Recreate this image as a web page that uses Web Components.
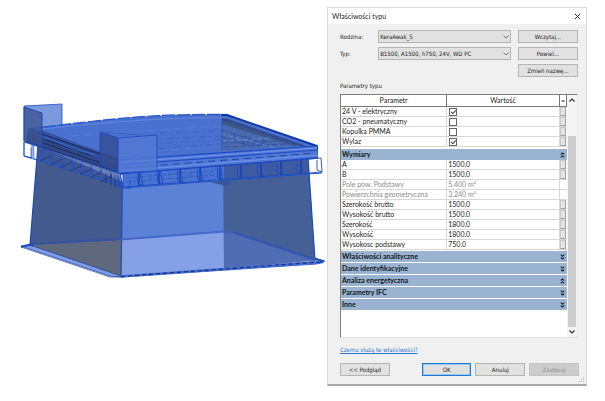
<!DOCTYPE html>
<html lang="pl">
<head>
<meta charset="utf-8">
<title>Właściwości typu</title>
<style>
body { margin: 0; background: #fff; color: #222; font: 6px/8px "DejaVu Sans Condensed", "DejaVu Sans", sans-serif; }
</style>
</head>
<body>
<app-page>
  <model-view slot="view"></model-view>
  <type-dialog>
    <span slot="title">Właściwości typu</span>
    <type-picker></type-picker>
    <param-table></param-table>
    <a slot="help" href="#help">Czemu służą te właściwości?</a>
    <ui-button slot="actions">&lt;&lt; Podgląd</ui-button>
    <ui-button slot="actions" primary>OK</ui-button>
    <ui-button slot="actions">Anuluj</ui-button>
    <ui-button slot="actions" disabled>Zastosuj</ui-button>
  </type-dialog>
</app-page>
<script>
class Base extends HTMLElement {
  constructor() {
    super();
    this.attachShadow({ mode: 'open' }).innerHTML = this.render();
  }
  render() { return ''; }
}

customElements.define('app-page', class extends Base {
  render() {
    return `<style>
      :host { display: grid; grid-template-columns: 327fr 260fr; padding: 7px 18px 15px 0; align-items: start; }
    </style><slot name="view"></slot><slot></slot>`;
  }
});

customElements.define('ui-button', class extends HTMLElement {
  connectedCallback() {
    if (this.shadowRoot) return;
    this.attachShadow({ mode: 'open' }).innerHTML = `<style>
      :host { display: block; }
      button { display: block; box-sizing: border-box; width: 100%; height: 13px; padding: 0; font: inherit; line-height: 10px;
        color: #222; background: #e1e1e1; border: 1px solid #b4b4b4; text-align: center; white-space: nowrap; }
      :host([primary]) button { border-color: #1a7ad4; box-shadow: inset 0 0 0 1px #9cc6ec; }
      button:disabled { color: #888; background: #ccc; border-color: #c4c4c4; }
    </style><button type="button" ${this.hasAttribute('disabled') ? 'disabled' : ''}><slot></slot></button>`;
  }
});

customElements.define('type-dialog', class extends Base {
  render() {
    return `<style>
      :host { display: block; background: #f0f0f0; border: 1px solid #dadada; border-bottom: 2px solid #aaa; position: relative; }
      header { display: flex; justify-content: space-between; align-items: center; background: #fff; height: 16px; padding: 0 5px 0 4px; font: 7px/9px Lato, sans-serif; }
      header button { border: 0; padding: 0; background: none; display: block; width: 7px; height: 7px; }
      header svg { display: block; width: 7px; height: 7px; }
      main { padding: 6px 7px 0 12px; }
      .help { padding-top: 7px; line-height: 9px; }
      ::slotted(a) { color: #2878cc; }
      footer { display: grid; grid-template-columns: 50fr 24fr 50fr 50fr 50fr; column-gap: 4px; padding: 9px 0 8px; }
      ::slotted(ui-button[primary]) { grid-column: 3; }
      .grip { position: absolute; right: 1px; bottom: 1px; width: 6px; height: 6px; }
    </style>
    <header><slot name="title"></slot>
      <button type="button" aria-label="Zamknij"><svg viewBox="0 0 7 7"><path d="M.8.8 6.2 6.2M6.2.8.8 6.2" stroke="#222" stroke-width=".9"/></svg></button>
    </header>
    <main><slot></slot><div class="help"><slot name="help"></slot></div>
      <footer><slot name="actions"></slot></footer></main>
    <svg class="grip" viewBox="0 0 6 6" fill="#b5b5b5"><path d="M4 0h1v1H4zM2 2h1v1H2zM4 2h1v1H4zM0 4h1v1H0zM2 4h1v1H2zM4 4h1v1H4z"/></svg>`;
  }
});

customElements.define('type-picker', class extends Base {
  render() {
    return `<style>
      :host { display: grid; grid-template-columns: 38fr 139fr 60fr; row-gap: 4px; align-items: center; padding: 0 1px 4px 0; }
      select { appearance: none; box-sizing: border-box; width: 100%; height: 13px; border: 1px solid #b4b4b4; border-radius: 0;
        padding: 0 12px 0 1px; margin: 0; font: inherit; line-height: 11px; color: #222; background: #e1e1e1;  }
      .pick { display: grid; align-items: center; margin-right: 7px; }
      .pick > * { grid-area: 1 / 1; }
      .pick svg { justify-self: end; width: 6px; height: 4px; margin-right: 2px; pointer-events: none; }
      ui-button:last-child { grid-column: 3; }
    </style>
    <label for="f">Rodzina:</label>
    <div class="pick"><select id="f"><option>KeraAwak_S</option></select><svg viewBox="0 0 6 4"><path d="M.5.5 3 3 5.5.5" fill="none" stroke="#555" stroke-width=".8"/></svg></div>
    <ui-button>Wczytaj...</ui-button>
    <label for="t">Typ:</label>
    <div class="pick"><select id="t"><option>B1500, A1500, h750, 24V, WD PC</option></select><svg viewBox="0 0 6 4"><path d="M.5.5 3 3 5.5.5" fill="none" stroke="#555" stroke-width=".8"/></svg></div>
    <ui-button>Powiel...</ui-button>
    <ui-button>Zmień nazwę...</ui-button>`;
  }
});

const groups = [
  { rows: [['24 V - elektryczny', true], ['CO2 - pneumatyczny', false], ['Kopulka PMMA', false], ['Wylaz', true]] },
  { title: 'Wymiary', open: true, rows: [['A', '1500.0'], ['B', '1500.0'],
    ['Pole pow. Podstawy', '5.400 m²', 1], ['Powierzchnia geometryczna', '3.240 m²', 1],
    ['Szerokość brutto', '1500.0'], ['Wysokość brutto', '1500.0'], ['Szerokość', '1800.0'],
    ['Wysokość', '1800.0'], ['Wysokosc podstawy', '750.0']] },
  { title: 'Właściwości analityczne', rows: [] },
  { title: 'Dane identyfikacyjne', rows: [] },
  { title: 'Analiza energetyczna', open: true, rows: [] },
  { title: 'Parametry IFC', rows: [] },
  { title: 'Inne', rows: [] }
];

customElements.define('param-table', class extends Base {
  render() {
    const chev = up => `<svg viewBox="0 0 5 6"><path d="${up ? 'M.8 2.500 2.500.9l1.700 1.600M.8 5.300l1.700-1.600 1.700 1.600' : 'M.8.7l1.700 1.600L4.200.7M.8 3.500l1.700 1.600 1.700-1.600'}" fill="none" stroke="#1c2836" stroke-width="1.100"/></svg>`;
    const cell = (n, v) => typeof v === 'boolean' ? `<input type="checkbox" aria-label="${n}" ${v ? 'checked' : ''}>` : v;
    const body = groups.map(g => `<tbody>${g.title ? `<tr class="group"><th colspan="3"><div>${g.title}<button type="button" aria-label="${g.title}">${chev(g.open)}</button></div></th></tr>` : ''}${
      g.rows.map(([n, v, ro]) => `<tr class="${ro ? 'ro' : ''}"><td>${n}</td><td>${cell(n, v)}</td><td>${ro ? '' : `<button type="button" aria-label="Powiąż ${n}"></button>`}</td></tr>`).join('')}</tbody>`).join('');
    return `<style>
      :host { display: block; }
      .cap { line-height: 10px; padding-bottom: 3px; }
      .frame { display: grid; grid-template-columns: 1fr 10px; height: 244px; background: #fff; box-sizing: border-box;
        border: 1px solid #808080; border-right-color: #e8e8e8; border-bottom-color: #e0e0e0; margin-right: 1px; }
      table { width: 100%; border-collapse: separate; border-spacing: 0; table-layout: fixed; font: 7px/9px Lato, sans-serif; align-self: start; }
      th, td { padding: 0; text-align: left; height: 9px; white-space: nowrap; overflow: hidden; }
      thead th { text-align: center; font-weight: 400; height: 11px; border-bottom: 1px solid #777; border-right: 1px solid #777; }
      td { border-bottom: 1px solid #d6d6d6; border-right: 1px solid #d6d6d6; padding-left: 1px; }
      td:last-child { padding: 0; border-right: 0; }
      .ro { color: #8a8a8a; }
      .group th { height: auto; font-weight: 700; border-top: 1px solid #fff; color: #101820; }
      .group div { display: flex; justify-content: space-between; align-items: center; height: 11px; line-height: 11px; padding: 0 2px 0 1px; background: #99b3d1; }
      tbody:nth-of-type(2) th { border-top-width: 2px; }
      button { display: block; border: 0; margin: 0; padding: 0; background: none; }
      .group svg { display: block; width: 5px; height: 6px; }
      td button { box-sizing: border-box; width: 6px; height: 9px; background: #e4e4e4; border: 1px solid #c8c8c8; border-right-color: #a0a0a0; border-bottom-color: #a0a0a0; }
      input { appearance: none; display: block; box-sizing: border-box; width: 8px; height: 8px; margin: 0 0 0 1px; border: 1px solid #666; background: #fff; }
      input:checked::after { content: ""; display: block; box-sizing: border-box; width: 5px; height: 3px; border: solid #444; border-width: 0 0 1px 1px; transform: translate(1px, 1px) rotate(-45deg); }
      .bar { display: flex; flex-direction: column; align-items: center; justify-content: space-between; background: #f4f4f4; }
      .bar button { width: 10px; height: 10px; display: grid; place-items: center; }
      .bar svg { width: 6px; height: 4px; }
      .track { flex: 1; width: 8px; display: flex; padding: 31px 0 0; }
      .thumb { flex: 1; background: #cdcdcd; }
    </style>
    <div class="cap">Parametry typu</div>
    <div class="frame">
      <table><colgroup><col style="width:47%"><col><col style="width:7px"></colgroup>
        <thead><tr><th>Parametr</th><th>Wartość</th><th>=</th></tr></thead>${body}</table>
      <div class="bar">
        <button type="button" aria-label="W górę"><svg viewBox="0 0 6 4"><path d="M.5 3.500 3 1l2.500 2.500" fill="none" stroke="#333" stroke-width="1.200"/></svg></button>
        <div class="track"><div class="thumb"></div></div>
        <button type="button" aria-label="W dół"><svg viewBox="0 0 6 4"><path d="M.5.5 3 3 5.500.5" fill="none" stroke="#333" stroke-width="1.200"/></svg></button>
      </div>
    </div>`;
  }
});

customElements.define('model-view', class extends Base {
  render() {
    const seg = (a, b, t) => [a[0] + (b[0] - a[0]) * t, a[1] + (b[1] - a[1]) * t].map(v => v.toFixed(1)).join(' ');
    // Frames hung below the roof edge: posts between an upper and a lower rail, with a smaller inner return.
    const cage = (u0, u1, l0, l1, n, dx, dy) => {
      let d = `M${u0}L${u1}M${l0}L${l1}`;
      for (let i = 0; i <= n; i++) {
        const t = i / n, lo = seg(l0, l1, t).split(' ').map(Number);
        d += `M${seg(u0, u1, t)}L${lo.join(' ')}l${dx} ${dy}v-10`;
      }
      return d;
    };
    const rail = (a, b, n) => { let d = ''; for (let i = 0; i < n; i++) d += `M${seg(a, b, i / n)}L${seg(a, b, (i + .6) / n)}`; return d; };
    return `<style>:host { display: block; } svg { display: block; width: 100%; height: auto; }</style>
    <svg viewBox="0 7 327 378" role="img" aria-label="Model 3D klapy dymowej" stroke-linejoin="round">
      <polygon points="21,246 30,244 224,231 236,232 324,261 317,264 121,277 110,276" fill="#809de4" stroke="#244fc0" stroke-width=".8"/>
      <polygon points="38,145 123,182 121,276 30,245" fill="#435a8f"/>
      <polygon points="30,245 121,240 121,276" fill="#5f687c"/>
      <polygon points="123,180 224,172 224,232 121,240" fill="#5b82d4"/>
      <polygon points="121,240 224,232 224,269 121,276" fill="#86a0e5"/>
      <polygon points="223,165 308,157 315,260 224,269" fill="#446097"/>
      <polygon points="224,232 233,232 315,260 224,269" fill="#506db3"/>
      <path d="M38 145 30 245M122.500 183 121 276M308 158 315 260" fill="none" stroke="#184abe" stroke-width="1.200"/>
      <path d="M31 244 121 239" stroke="#3552a2" stroke-width="1.800"/>
      <path d="M121 239.500 224 231.500" stroke="#4369ca" stroke-width="2"/>
      <path d="M224 232h8L315 260" fill="none" stroke="#3f62b6" stroke-width="2.500"/>
      <path d="M233 232 314 259M30 245 121 276M21 247 110 277h11" fill="none" stroke="#244799" stroke-width=".7"/>
      <path d="M121 276.500 323 262" stroke="#416bd0" stroke-width="2.500"/>
      <path d="M121 276.500 319 262" stroke="#17327c" stroke-width="1.200" stroke-dasharray="4 3"/>
      <path d="M21 247l9-2 3 1M315 259l9 2-5 2" fill="none" stroke="#1746b3" stroke-width="1.500"/>

      <polygon points="24,106 62,104 62,125 42,130 24,141" fill="#7d99dd" stroke="#1e4fc9" stroke-width=".8"/>
      <path d="M28 129Q90 121 130 117.500T226 114.500L317 146 318 158 120 174 26 142Z" fill="#4a70cc"/>
      <path d="M38 128Q90 121 140 119T223 117.500L222 148 118 162Z" fill="#4a70d0"/>
      <polygon points="222,118 227,118 304,145 222,151" fill="#496aae"/>
      <polygon points="222,118 228,119 304,145 294,146 222,124" fill="#3c5486"/>
      <path d="M160 133 221 131M135 140 222 136M150 144 222 140M158 149 222 144" fill="none" stroke="#4068c2" stroke-width="1.300" stroke-dasharray="7 3 2 4"/>
      <path d="M132 153 221 146M70 136 221 126" fill="none" stroke="#567cda" stroke-width="1" stroke-dasharray="9 4"/>
      <path d="M222 130 268 145M222 137 250 146M222 143 286 141M224 147 286 144M235 133v8l9 4v-9l9 3v7l9-1v-5l9 3" fill="none" stroke="#3253a2" stroke-width=".9" stroke-dasharray="6 2"/>
      <path d="M222 134 276 148M223 141 272 138" stroke="#6d8edb" stroke-width=".8" stroke-dasharray="4 3"/>
      <polygon points="28,128 40,130 118,158 118,172 26,142" fill="#304984"/>
      <path d="M28 129 118 160M29 134 118 165M29 138 118 169M26 142 120 173" fill="none" stroke="#1a2e6a" stroke-width="1.300"/>
      <path d="M36 134 118 163M31 131v8M38 137 50 139 62 144 75 150 88 153 101 160 115 163M34 130 118 158" fill="none" stroke="#3762d0" stroke-width=".9"/>
      <path d="M28 129Q90 121 130 117.500T226 114.500" fill="none" stroke="#2456c6" stroke-width="1.200" stroke-dasharray="13 2"/>
      <path d="M34 130Q95 123 145 120T222 118" fill="none" stroke="#628add" stroke-width="1"/>
      <path d="M221 115h6L317 146v12" fill="none" stroke="#0e37ad" stroke-width="2"/>
      <path d="M223 119 306 147" stroke="#284ba0" stroke-width="1.500"/>
      <path d="M222 118V151" stroke="#2e50a9" stroke-width=".8"/>

      <polygon points="118,160 317,146 318,158 120,174" fill="#5177d4"/>
      <path d="M118 160 317 146M118 165 317 150" stroke="#1d4bc4" stroke-width="1.200"/>
      <path d="M118 162.500 317 148M120 171 318 155" stroke="#6f94ea" stroke-width="1"/>
      <path d="${rail([125, 168], [315, 153], 16)}" stroke="#2148ab" stroke-width="1"/>
      <path d="M120 174 318 158" stroke="#1a49bd" stroke-width="1.300"/>

      <polygon points="38,147 118,173 123,188 38,160" fill="#3b5599" opacity=".75"/>
      <polygon points="123,174 224,166 224,180 123,187" fill="#4a72d2"/>
      <polygon points="224,166 308,159 308,174 224,180" fill="#3f5b9d"/>
      <path d="${cage([24, 142], [120, 174], [24, 156], [123, 187], 10, 7, 2)}" fill="none" stroke="#2554c4" stroke-width=".8"/>
      <path d="M40 161 52 155M50 165 62 159M60 168 72 162M70 171 82 166M80 174 92 169M90 178 102 172M100 182 112 176M106 173v10M111 174v11M115 175v12" fill="none" stroke="#1d3478" stroke-width=".8"/>
      <path d="M24 142v14l8 2v-13M119 174v14M123 174v14" fill="none" stroke="#1f50ca" stroke-width=".9"/>
      <path d="${cage([120, 174], [321, 158], [123, 187], [322, 172], 10, -5, -2)}" fill="none" stroke="#1a4ac6" stroke-width=".9"/>
      <path d="M126 182 304 168M126 178 304 163M142 184 158 173M182 180 198 170M203 179 216 169M244 175 259 165M263 173 278 164M283 172 298 162M228 178 240 166" fill="none" stroke="#315bbd" stroke-width=".8" stroke-dasharray="5 2"/>
      <path d="M139 172V186M159 170V184M180 169V183M200 167V181M220 166V180M241 164V179M261 163V177M281 161V176M301 160V174" stroke="#153fae" stroke-width="1.300"/>
      <path d="M123 188 322 173" stroke="#2454c4" stroke-width="1"/>
      <polygon points="210,182 230,180 232,184 228,186 222,185" fill="#385797"/>

      <polygon points="24,107 42,113 42,147 24,141" fill="#3c5492" fill-opacity=".8" stroke="#1845b5" stroke-width=".9"/>
      <polygon points="100,132 118,138 118,172 100,165" fill="#344d8f" fill-opacity=".8" stroke="#1a49ba" stroke-width=".9"/>
      <polygon points="118,138 157,135 157,171 118,173" fill="#5479d3" fill-opacity=".8" stroke="#1d4fc4" stroke-width=".9"/>
      <path d="M100 132 140 135" stroke="#315bbc" stroke-width=".7"/>
    </svg>`;
  }
});
</script>
</body>
</html>
